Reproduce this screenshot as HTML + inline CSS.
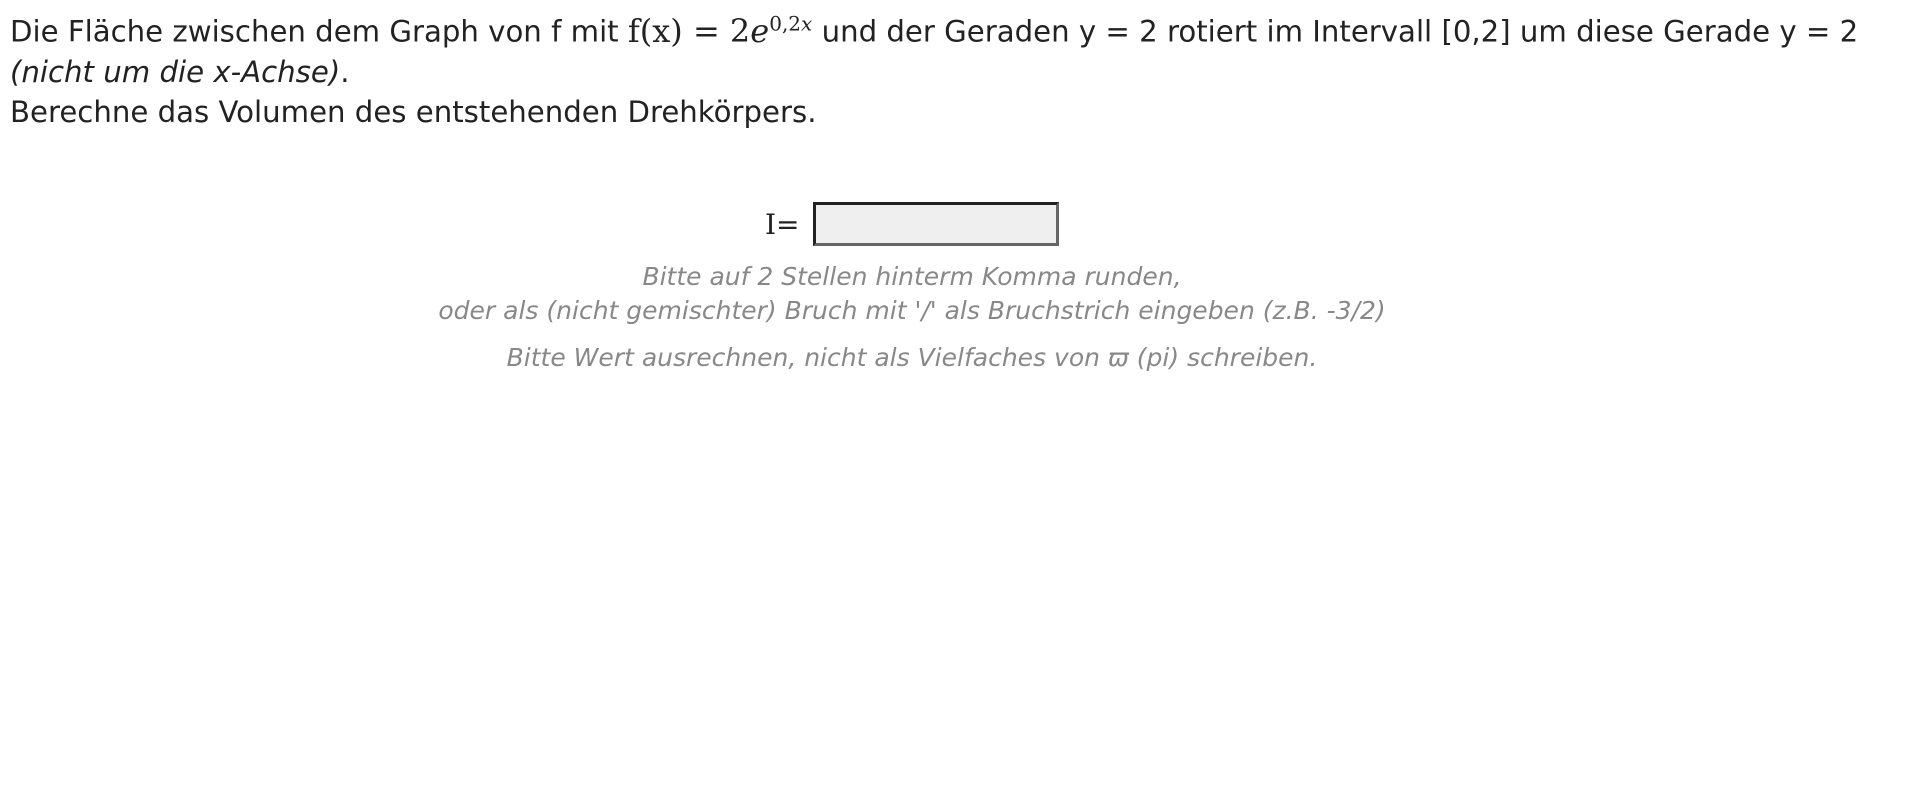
<!DOCTYPE html>
<html><head><meta charset="utf-8"><style>
body{margin:0;width:1920px;height:810px;background:#fff;font-family:"DejaVu Sans","Liberation Sans",sans-serif;color:#222;position:relative;overflow:hidden}
.q{position:absolute;left:10px;top:3px;font-size:29.2px;line-height:40px;white-space:nowrap}
.m{font-family:"DejaVu Serif","Liberation Serif",serif;font-size:32px}
.lab{position:absolute;left:765px;top:205px;font-size:28px;font-family:"DejaVu Serif",serif;line-height:40px}
.box{position:absolute;left:813px;top:202px;width:240px;height:38px;background:#efefef;border:3px solid #666;border-top-color:#222;border-left-color:#222}
.h{position:absolute;left:0;width:1824px;text-align:center;font-style:italic;color:#888;font-size:25px;line-height:34px}
</style></head><body>
<div class="q">Die Fläche zwischen dem Graph von f mit <span class="m">f(x) = 2<i>e</i><sup style="font-size:20px">0,2<i>x</i></sup></span> und der Geraden y = 2 rotiert im Intervall [0,2] um diese Gerade y = 2<br><i>(nicht um die x-Achse)</i>.<br>Berechne das Volumen des entstehenden Drehkörpers.</div>
<div class="lab">I=</div>
<div class="box"></div>
<div class="h" style="top:260px">Bitte auf 2 Stellen hinterm Komma runden,<br>oder als (nicht gemischter) Bruch mit '/' als Bruchstrich eingeben (z.B. -3/2)</div>
<div class="h" style="top:341px">Bitte Wert ausrechnen, nicht als Vielfaches von ϖ (pi) schreiben.</div>
</body></html>
